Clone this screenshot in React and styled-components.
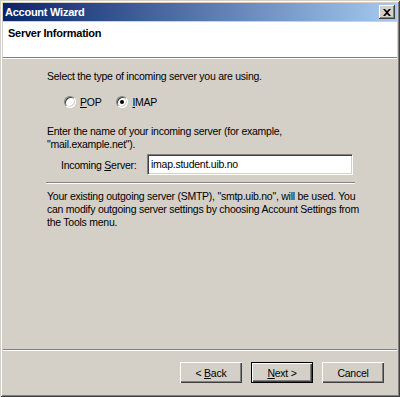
import React, { useState } from 'react';
import styled, { createGlobalStyle } from 'styled-components';

const GlobalStyle = createGlobalStyle`
  html, body {
    margin: 0;
    padding: 0;
    background: #d4d0c8;
  }
  body {
    font-family: Tahoma, "Liberation Sans", Arial, sans-serif;
    font-size: 10.5px;
    letter-spacing: -0.25px;
    color: #000;
  }
`

const Window = styled.div`
  box-sizing: border-box;
  width: 400px;
  height: 397px;
  padding: 3px;
  display: flex;
  flex-direction: column;
  background: #d4d0c8;
  box-shadow: inset 1px 1px #d4d0c8, inset -1px -1px #404040,
    inset 2px 2px #ffffff, inset -2px -2px #808080;
`

const TitleBar = styled.div`
  height: 18px;
  display: flex;
  align-items: center;
  justify-content: space-between;
  padding: 0 2px 0 2px;
  background: linear-gradient(to right, #0a246a, #a6caf0);
  color: #fff;
  font-weight: bold;
  font-size: 11px;
`

const CloseButton = styled.div`
  box-sizing: border-box;
  width: 16px;
  height: 14px;
  display: flex;
  align-items: center;
  justify-content: center;
  background: #d4d0c8;
  box-shadow: inset -1px -1px #404040, inset 1px 1px #ffffff,
    inset -2px -2px #808080;
`

const Header = styled.div`
  height: 35px;
  margin-top: 1px;
  background: #fff;
  padding: 5px 0 0 5px;
  box-sizing: border-box;
  font-weight: bold;
  font-size: 11px;
`

const Groove = styled.div`
  height: 0;
  border-top: 1px solid #808080;
  border-bottom: 1px solid #ffffff;
  margin: ${props => props.$margin || '0'};
`

const Body = styled.div`
  flex: 1;
  padding: 11px 30px 0 44px;
`

const Para = styled.p`
  margin: ${props => props.$top || 0}px 0 0 0;
  line-height: 13px;
  white-space: nowrap;
`

const RadioRow = styled.div`
  display: flex;
  align-items: center;
  margin: 13px 0 0 17px;
`

const RadioOption = styled.label`
  display: flex;
  align-items: center;
  gap: 4px;
  margin-right: 15px;
`

const RadioCircle = styled.span`
  box-sizing: border-box;
  position: relative;
  width: 12px;
  height: 12px;
  border-radius: 50%;
  background: #fff;
  border: 1px solid;
  border-color: #808080 #ffffff #ffffff #808080;
  box-shadow: inset 1px 1px #404040, inset -1px -1px #d4d0c8;
  &::after {
    content: '';
    display: ${props => (props.$checked ? 'block' : 'none')};
    position: absolute;
    left: 3px;
    top: 3px;
    width: 4px;
    height: 4px;
    border-radius: 50%;
    background: #000;
  }
`

const Key = styled.span`
  text-decoration: underline;
`

const FieldRow = styled.div`
  display: flex;
  align-items: center;
  margin: 3px 0 0 14px;
`

const FieldLabel = styled.span`
  width: 86px;
  white-space: nowrap;
`

const TextBox = styled.div`
  box-sizing: border-box;
  width: 206px;
  height: 21px;
  padding: 3px 3px;
  background: #fff;
  border: 1px solid;
  border-color: #808080 #ffffff #ffffff #808080;
  box-shadow: inset 1px 1px #404040, inset -1px -1px #d4d0c8;
  line-height: 13px;
`

const Footer = styled.div`
  display: flex;
  justify-content: flex-end;
  gap: 9px;
  padding: 11px 13px 0 0;
  height: 43px;
  box-sizing: border-box;
`

const Button = styled.button`
  box-sizing: border-box;
  width: 62px;
  height: 21px;
  padding: 0;
  font-family: inherit;
  font-size: inherit;
  letter-spacing: inherit;
  color: #000;
  background: #d4d0c8;
  border: ${props => (props.$default ? '1px solid #000' : 'none')};
  box-shadow: inset 1px 1px #ffffff, inset -1px -1px #404040,
    inset -2px -2px #808080;
`

export default function App() {
  const [server] = useState('imap.student.uib.no')
  return (
    <>
      <GlobalStyle />
      <Window>
        <TitleBar>
          <span>Account Wizard</span>
          <CloseButton>
            <svg width="8" height="7" viewBox="0 0 8 7">
              <path d="M0 0h2l2 2 2-2h2L5 3.5 8 7H6L4 5 2 7H0l3-3.5z" fill="#000" />
            </svg>
          </CloseButton>
        </TitleBar>
        <Header>Server Information</Header>
        <Groove />
        <Body>
          <Para>Select the type of incoming server you are using.</Para>
          <RadioRow>
            <RadioOption>
              <RadioCircle />
              <span><Key>P</Key>OP</span>
            </RadioOption>
            <RadioOption>
              <RadioCircle $checked />
              <span><Key>I</Key>MAP</span>
            </RadioOption>
          </RadioRow>
          <Para $top={17}>
            Enter the name of your incoming server (for example,
            <br />"mail.example.net").
          </Para>
          <FieldRow>
            <FieldLabel>Incoming <Key>S</Key>erver:</FieldLabel>
            <TextBox>{server}</TextBox>
          </FieldRow>
          <Groove $margin="7px 12px 0 -1px" />
          <Para $top={6}>
            Your existing outgoing server (SMTP), "smtp.uib.no", will be used. You
            <br />can modify outgoing server settings by choosing Account Settings from
            <br />the Tools menu.
          </Para>
        </Body>
        <Groove />
        <Footer>
          <Button>&lt; <Key>B</Key>ack</Button>
          <Button $default><Key>N</Key>ext &gt;</Button>
          <Button>Cancel</Button>
        </Footer>
      </Window>
    </>
  )
}
